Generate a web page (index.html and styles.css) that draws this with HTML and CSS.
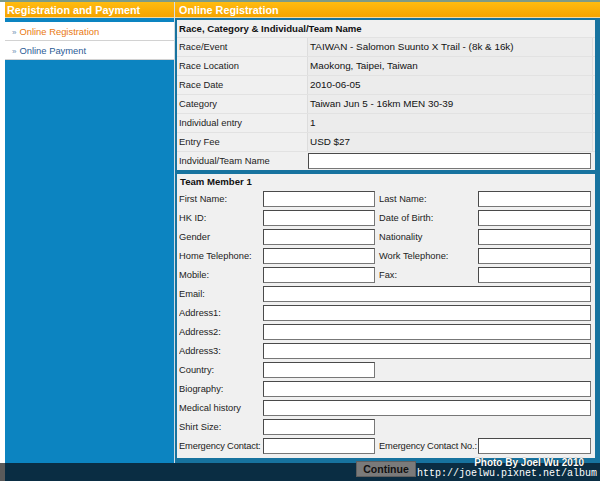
FILE: index.html
```html
<!DOCTYPE html>
<html>
<head>
<meta charset="utf-8">
<link rel="stylesheet" href="styles.css">
</head>
<body>
<div class="topline"></div>
<div class="layout">
  <aside class="side">
    <div class="head">Registration and Payment</div>
    <ul class="menu">
      <li class="active"><span class="chev">&raquo;</span>Online Registration</li>
      <li><span class="chev">&raquo;</span>Online Payment</li>
    </ul>
  </aside>
  <main class="main">
    <div class="head">Online Registration</div>
    <section class="panel info">
      <div class="ptitle">Race, Category &amp; Individual/Team Name</div>
      <div class="irow"><div class="lab">Race/Event</div><div class="val">TAIWAN - Salomon Suunto X Trail - (8k &amp; 16k)</div></div>
      <div class="irow"><div class="lab">Race Location</div><div class="val">Maokong, Taipei, Taiwan</div></div>
      <div class="irow"><div class="lab">Race Date</div><div class="val">2010-06-05</div></div>
      <div class="irow"><div class="lab">Category</div><div class="val">Taiwan Jun 5 - 16km MEN 30-39</div></div>
      <div class="irow"><div class="lab">Individual entry</div><div class="val">1</div></div>
      <div class="irow"><div class="lab">Entry Fee</div><div class="val">USD $27</div></div>
      <div class="irow"><div class="lab">Indvidual/Team Name</div><div class="val plain"><input class="box wide" type="text"></div></div>
    </section>
    <section class="panel member">
      <div class="ptitle">Team Member 1</div>
      <div class="grid">
        <label>First Name:</label><input class="box" type="text"><label class="l2">Last Name:</label><input class="box" type="text">
        <label>HK ID:</label><input class="box" type="text"><label class="l2">Date of Birth:</label><input class="box" type="text">
        <label>Gender</label><input class="box" type="text"><label class="l2">Nationality</label><input class="box" type="text">
        <label>Home Telephone:</label><input class="box" type="text"><label class="l2">Work Telephone:</label><input class="box" type="text">
        <label>Mobile:</label><input class="box" type="text"><label class="l2">Fax:</label><input class="box" type="text">
        <label>Email:</label><input class="box full" type="text">
        <label>Address1:</label><input class="box full" type="text">
        <label>Address2:</label><input class="box full" type="text">
        <label>Address3:</label><input class="box full" type="text">
        <label>Country:</label><input class="box" type="text"><span class="fill"></span>
        <label>Biography:</label><input class="box full" type="text">
        <label>Medical history</label><input class="box full" type="text">
        <label>Shirt Size:</label><input class="box" type="text"><span class="fill"></span>
        <label class="tight">Emergency Contact:</label><input class="box" type="text"><label class="l2 tight">Emergency Contact No.:</label><input class="box" type="text">
      </div>
    </section>
  </main>
</div>
<footer class="bottom">
  <div class="edge"></div>
  <div class="bar">
    <button class="continue" type="button">Continue</button>
  </div>
  <div class="mark">
    <div class="m1">Photo By Joel Wu 2010</div>
    <div class="m2">http://joelwu.pixnet.net/album</div>
  </div>
</footer>
</body>
</html>
```
FILE: styles.css
```css
* { box-sizing: border-box; }
html, body { margin: 0; padding: 0; }
body {
  width: 600px;
  height: 481px;
  overflow: hidden;
  background: #ffffff;
  font-family: "Liberation Sans", Arial, sans-serif;
  color: #1a1a1a;
  position: relative;
}
.topline { height: 2px; background: #7f9b86; }
.layout {
  display: flex;
  height: 461px;
  padding-left: 5px;
  background: #ffffff;
}
.head {
  height: 16px;
  background: linear-gradient(#ffbb10, #f6a400);
  color: #ffffff;
  font-weight: bold;
  font-size: 10.8px;
  line-height: 16px;
  padding-left: 2px;
  border-bottom: 1px solid #f3d9a0;
}
.side {
  width: 170px;
  background: #0c84c1;
  border-right: 1px solid #d4dde3;
}
.menu {
  list-style: none;
  margin: 4px 0 0 0;
  padding: 0;
}
.menu li {
  height: 19px;
  background: #ffffff;
  border-bottom: 1px solid #d2d2d2;
  font-size: 9.4px;
  line-height: 20px;
  padding-left: 7px;
  color: #2b5b96;
}
.menu li.active { color: #e9780f; }
.chev { font-size: 8px; margin-right: 3px; color: #6f8fb5; }
.main {
  flex: 1;
  background: #17739f;
}
.main .head { padding-left: 4px; }
.panel {
  margin: 2px 5px 0 2px;
  background: #f0f0f0;
}
.info { height: 150px; }
.ptitle {
  height: 16px;
  font-size: 9.6px;
  font-weight: bold;
  line-height: 16px;
  padding-left: 2px;
  color: #111;
}
.info .ptitle { height: 17px; line-height: 18px; }
.irow {
  display: flex;
  height: 19px;
  border-top: 1px solid #e2e2e2;
}
.lab {
  width: 130px;
  font-size: 9.4px;
  line-height: 18px;
  padding-left: 2px;
  color: #222;
}
.val {
  flex: 1;
  background: #ececec;
  border-left: 1px solid #dddddd;
  border-right: 1px solid #dddddd;
  font-size: 9.9px;
  line-height: 18px;
  padding-left: 2px;
  color: #111;
  margin-right: 2px;
}
.val.plain { background: #f0f0f0; padding-left: 1px; border: 0; padding-top: 1px; }
.box {
  display: block;
  height: 16px;
  margin: 0;
  padding: 0;
  background: #ffffff;
  border: 1px solid #777;
  border-top-color: #4a4a4a;
  border-left-color: #4a4a4a;
  font-size: 9px;
}
.box.wide { width: 283px; }
.member { height: 284px; margin-top: 4px; padding: 0 3px 0 2px; }
.member .ptitle { padding-left: 1px; }
.grid {
  display: grid;
  grid-template-columns: 84px 112px 103px 113px;
  grid-auto-rows: 16px;
  row-gap: 3px;
  padding-top: 1px;
}
.grid label {
  font-size: 9.3px;
  line-height: 16px;
  color: #222;
  white-space: nowrap;
  overflow: hidden;
}
.grid .l2 { padding-left: 4px; }
.grid .tight { letter-spacing: -0.15px; }
.grid .full { grid-column: 2 / 5; }
.grid .fill { grid-column: 3 / 5; }
.bottom {
  display: flex;
  height: 18px;
}
.edge { width: 5px; background: #5a5a5a; }
.bar {
  flex: 1;
  background: #0a2d43;
  padding-left: 351px;
}
.continue {
  display: block;
  width: 60px;
  height: 16px;
  margin-top: -2px;
  padding: 0;
  background: #7a7a7a;
  border: 1px solid #5f5f5f;
  font-family: "Liberation Sans", Arial, sans-serif;
  font-weight: bold;
  font-size: 10.5px;
  color: #111;
  line-height: 14px;
}
.mark {
  position: absolute;
  right: 3px;
  bottom: 1px;
  text-align: right;
  color: #ffffff;
}
.m1 {
  font-family: "Liberation Sans", Arial, sans-serif;
  font-weight: bold;
  font-size: 10px;
  line-height: 11px;
  padding-right: 13px;
  text-shadow: 0 0 1px #000;
}
.m2 {
  font-family: "Liberation Mono", "DejaVu Sans Mono", monospace;
  font-size: 10px;
  line-height: 12px;
  letter-spacing: 0;
}
```
